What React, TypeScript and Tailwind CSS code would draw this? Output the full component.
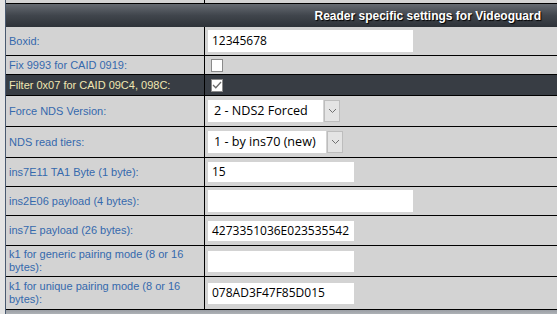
import type { JSX } from "react";

type Row = {
  label: string;
  h: string;
  kind: "input" | "check" | "select";
  value?: string;
  w?: string;
  checked?: boolean;
  dark?: boolean;
};

const rows: Row[] = [
  { label: "Boxid:", h: "h-[29px]", kind: "input", value: "12345678", w: "w-[205px] h-[22px]" },
  { label: "Fix 9993 for CAID 0919:", h: "h-[19px]", kind: "check" },
  { label: "Filter 0x07 for CAID 09C4, 098C:", h: "h-[21px]", kind: "check", checked: true, dark: true },
  { label: "Force NDS Version:", h: "h-[31px]", kind: "select", value: "2 - NDS2 Forced", w: "w-[115px]" },
  { label: "NDS read tiers:", h: "h-[31px]", kind: "select", value: "1 - by ins70 (new)", w: "w-[118px]" },
  { label: "ins7E11 TA1 Byte (1 byte):", h: "h-[29px]", kind: "input", value: "15", w: "w-[146px] h-[20px]" },
  { label: "ins2E06 payload (4 bytes):", h: "h-[29px]", kind: "input", value: "", w: "w-[205px] h-[22px]" },
  { label: "ins7E payload (26 bytes):", h: "h-[30px]", kind: "input", value: "4273351036E023535542", w: "w-[146px] h-[20px]" },
  { label: "k1 for generic pairing mode (8 or 16 bytes):", h: "h-[31px]", kind: "input", value: "", w: "w-[146px] h-[21px]" },
  { label: "k1 for unique pairing mode (8 or 16 bytes):", h: "h-[33px]", kind: "input", value: "078AD3F47F85D015", w: "w-[146px] h-[21px]" },
];

const Chevron = () => (
  <svg width="9" height="6" viewBox="0 0 9 6" fill="none">
    <path d="M1 1l3.5 3.5L8 1" stroke="#707070" strokeWidth="1" />
  </svg>
);

const Value = ({ row }: { row: Row }): JSX.Element => {
  if (row.kind === "check") {
    return (
      <div className="w-[12px] h-[13px] bg-white border border-[#8a8a8a] ml-[6px] flex items-center justify-center">
        {row.checked && (
          <svg width="10" height="8" viewBox="0 0 10 8" fill="none">
            <path d="M1 4l2.8 2.8L9 1" stroke="#6a6a6a" strokeWidth="1.3" />
          </svg>
        )}
      </div>
    );
  }
  if (row.kind === "select") {
    return (
      <div className="flex items-center ml-[3px] h-[22px]">
        <div className={`${row.w} h-full bg-white flex items-center pl-[6px] text-[12.6px] text-black`}>{row.value}</div>
        <div className="w-[16px] h-full bg-[#e4e4e4] border border-[#bdbdbd] flex items-center justify-center ml-[1px]">
          <Chevron />
        </div>
      </div>
    );
  }
  return (
    <div className={`${row.w} ml-[3px] bg-white flex items-center pl-[4px] text-[12px] text-black`}>{row.value}</div>
  );
};

export default function App(): JSX.Element {
  return (
    <div className="w-[557px] h-[314px] overflow-hidden bg-[#e4e4e4] pl-[5px] font-['Liberation_Sans',Arial,sans-serif]">
      <div className="border-l border-[#4a5a70] bg-[#d3d3d3]">
        <div className="flex h-[4px] border-b border-black">
          <div className="w-[199px] border-r border-black" />
        </div>
        <div className="h-[23px] bg-gradient-to-b from-[#666b72] via-[#40454c] to-[#2e3339] flex items-center justify-end pr-[16px]">
          <span className="text-white font-bold text-[12px] [text-shadow:1px_1px_1px_#000]">
            Reader specific settings for Videoguard
          </span>
        </div>
        {rows.map((r) => (
          <div key={r.label} className={`flex border-b border-black ${r.h} ${r.dark ? "bg-[#383d44]" : ""}`}>
            <div
              className={`w-[199px] shrink-0 border-r border-black flex items-center pl-[3px] pr-[6px] text-[11px] leading-[13px] ${
                r.dark ? "text-[#f0e7b2]" : "text-[#3569ad]"
              }`}
            >
              {r.label}
            </div>
            <div className="flex-1 flex items-center font-['Open_Sans','Noto_Sans',sans-serif]">
              <Value row={r} />
            </div>
          </div>
        ))}
        <div className="h-[6px] bg-gradient-to-b from-[#9a9ea4] to-[#b8bcc0]" />
      </div>
    </div>
  );
}
